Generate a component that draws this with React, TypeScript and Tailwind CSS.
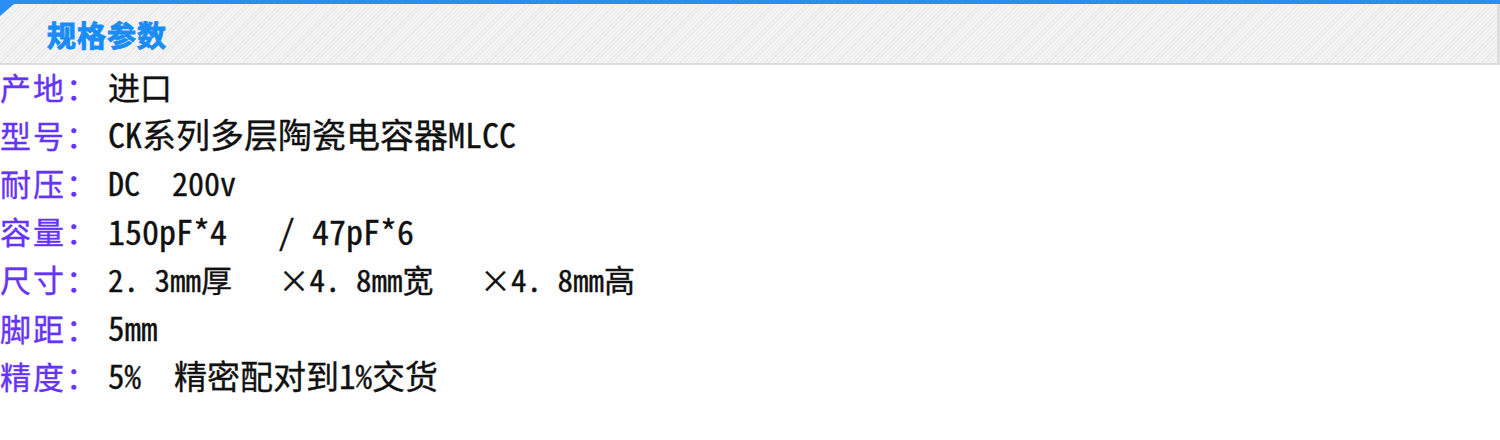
const rows = [
  { label: '产地：', value: '进口', size: 'text-[32px]' },
  { label: '型号：', value: 'CK系列多层陶瓷电容器MLCC', size: 'text-[34px]' },
  { label: '耐压：', value: 'DC  200v', size: 'text-[32px]' },
  { label: '容量：', value: '150pF*4   / 47pF*6', size: 'text-[34px]' },
  { label: '尺寸：', value: '2. 3mm厚   ×4. 8mm宽   ×4. 8mm高', size: 'text-[31px]' },
  { label: '脚距：', value: '5mm', size: 'text-[33px]' },
  { label: '精度：', value: '5%  精密配对到1%交货', size: 'text-[33px]' },
];

export default function App() {
  return (
    <div className="w-[1500px] h-[440px] bg-white overflow-hidden font-['Noto_Sans_Mono_CJK_SC','Noto_Sans_CJK_SC',sans-serif]">
      {/* header bar */}
      <div className="relative h-[65px] border-t-4 border-[#2a8ef2] bg-white">
        <div className="h-full flex items-center pl-[47px] border-t border-b-2 border-r-[3px] border-t-[#e6f2ff] border-b-[#dcdcdc] border-r-[#dddddd] bg-[repeating-linear-gradient(135deg,#f4f4f4_0px,#f4f4f4_2px,#eaeaea_2px,#eaeaea_3px)]">
          <span className="text-[29px] leading-none font-black text-[#1a8cf8] tracking-[1px] [-webkit-text-stroke:1px_#1a8cf8] [text-shadow:0_0_2px_#ffffff]">
            规格参数
          </span>
        </div>
        <svg className="absolute left-0 top-0" width="14" height="14" viewBox="0 0 14 14">
          <polygon points="0,0 14,0 0,12" fill="#2a8ef2" />
        </svg>
      </div>

      {/* spec rows */}
      <div className="flex flex-col -mt-[3px]">
        {rows.map((r) => (
          <div key={r.label} className="flex items-center h-[48.2px] leading-none whitespace-pre [-webkit-text-stroke:0.35px_currentColor]">
            <span className="w-[108px] shrink-0 text-[31px] tracking-[2px] text-[#6633f8]">{r.label}</span>
            <span className={`${r.size} text-[#111111]`}>{r.value}</span>
          </div>
        ))}
      </div>
    </div>
  );
}
